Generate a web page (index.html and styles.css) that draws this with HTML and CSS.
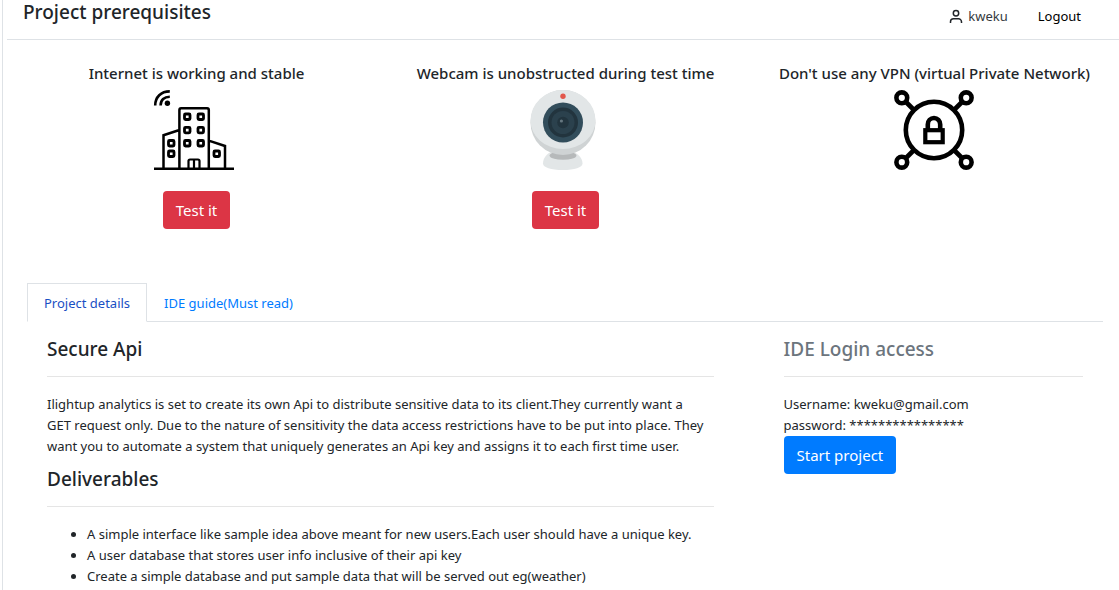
FILE: index.html
```html
<!DOCTYPE html>
<html lang="en">
<head>
<meta charset="utf-8">
<meta name="viewport" content="width=device-width, initial-scale=1">
<title>Project prerequisites</title>
<link rel="stylesheet" href="styles.css">
</head>
<body>
<div class="page">
  <header class="topbar">
    <h1 class="heading">Project prerequisites</h1>
    <nav class="account">
      <a class="user" href="#">
        <svg width="14" height="14" viewBox="0 0 14 14" fill="none" stroke="#212529" stroke-width="1.5" aria-hidden="true"><circle cx="7" cy="4.200" r="2.700"/><path d="M1.500 14v-1.200a3 3 0 0 1 3-3h5a3 3 0 0 1 3 3V14"/></svg>
        <span>kweku</span>
      </a>
      <a class="logout" href="#">Logout</a>
    </nav>
  </header>

  <section class="checks">
    <article class="check">
      <h2 class="check-title">Internet is working and stable</h2>
      <svg class="picture" viewBox="2 0 80 80" fill="none" stroke="#000" stroke-width="2.200" aria-hidden="true">
        <path d="M1.200 15.500C1.200 7 7 1.400 15.800 1.400M6.600 15.500c0-5.500 3.600-8.800 9.200-8.800" stroke-width="2.600"/>
        <circle cx="13.400" cy="13.200" r="2.700" fill="#000" stroke="none"/>
        <path d="M0 78.700h80" stroke-width="2.600"/>
        <path d="M25.400 78V20q0-1.700 1.700-1.700h26q1.700 0 1.700 1.700V78M25.400 40 9.500 45.200V78M54.800 50.600 71 56v22" stroke-width="2.500"/>
        <g stroke-width="2.800">
          <rect x="30.500" y="24" width="5.500" height="5.500" rx="1"/><rect x="44" y="24" width="5.500" height="5.500" rx="1"/>
          <rect x="30.500" y="37.300" width="5.500" height="5.500" rx="1"/><rect x="44" y="37.300" width="5.500" height="5.500" rx="1"/>
          <rect x="30.500" y="50.500" width="5.500" height="5.500" rx="1"/><rect x="44" y="50.500" width="5.500" height="5.500" rx="1"/>
          <rect x="14.500" y="50.500" width="5.500" height="5.500" rx="1"/><rect x="14.500" y="61" width="5.500" height="5.500" rx="1"/>
          <rect x="60" y="61" width="5.500" height="5.500" rx="1"/>
        </g>
        <path d="M34.500 78v-7q0-1.500 1.500-1.500h8q1.500 0 1.500 1.500v7M40 69.500V78"/>
      </svg>
      <button class="btn btn-danger" type="button">Test it</button>
    </article>
    <article class="check">
      <h2 class="check-title">Webcam is unobstructed during test time</h2>
      <svg class="picture" viewBox="0 0 80 80" aria-hidden="true">
        <path d="M18 73.500C18 68 22 63 28 61h18c7 2 11.500 7 11.500 12.500 0 4-8 6.500-19.700 6.500S18 77.500 18 73.500z" fill="#e2e6e7"/>
        <ellipse cx="38" cy="65.500" rx="13.500" ry="4.300" fill="#b6b9ba"/>
        <circle cx="38" cy="32.500" r="32.500" fill="#cfd3d4"/>
        <path d="M5.500 30.500a32.500 30.500 0 0 1 65 0 32.500 28.500 0 0 1-65 0z" fill="#e2e6e7"/>
        <circle cx="38" cy="6.300" r="2.700" fill="#e2574c"/>
        <circle cx="38" cy="32.500" r="20" fill="#324d5b"/>
        <circle cx="38" cy="32.500" r="15" fill="#22343e"/>
        <circle cx="38" cy="32.500" r="11.500" fill="#2b414d"/>
        <circle cx="38" cy="32.500" r="5.800" fill="#22343e"/>
        <circle cx="36.400" cy="31" r="1.600" fill="#667780"/>
      </svg>
      <button class="btn btn-danger" type="button">Test it</button>
    </article>
    <article class="check">
      <h2 class="check-title">Don't use any VPN (virtual Private Network)</h2>
      <svg class="picture" viewBox="0 0 80 80" fill="none" stroke="#000" stroke-width="4.600" aria-hidden="true">
        <circle cx="40" cy="40" r="28.200"/>
        <circle cx="7.800" cy="7.800" r="5.400"/><circle cx="72.200" cy="7.800" r="5.400"/><circle cx="7.800" cy="72.200" r="5.400"/><circle cx="72.200" cy="72.200" r="5.400"/>
        <path d="m12 12 8 8m40 0 8-8M12 68l8-8m40 0 8 8"/>
        <rect x="31.300" y="40.200" width="17.400" height="12" stroke-width="4.200"/>
        <path d="M33.800 39v-4.500a6.200 6.500 0 0 1 12.400 0V39" stroke-width="4.600"/>
      </svg>
    </article>
  </section>

  <main class="project">
    <div class="tabs" role="tablist">
      <a class="tab tab-active" role="tab" aria-selected="true" href="#details">Project details</a>
      <a class="tab" role="tab" aria-selected="false" href="#guide">IDE guide(Must read)</a>
    </div>
    <div class="panel" id="details" role="tabpanel">
      <section>
        <h2 class="heading section-title">Secure Api</h2>
        <p class="text">Ilightup analytics is set to create its own Api to distribute sensitive data to its client.They currently want a<br>GET request only. Due to the nature of sensitivity the data access restrictions have to be put into place. They<br>want you to automate a system that uniquely generates an Api key and assigns it to each first time user.</p>
        <h2 class="heading section-title next">Deliverables</h2>
        <ul class="list">
          <li>A simple interface like sample idea above meant for new users.Each user should have a unique key.</li>
          <li>A user database that stores user info inclusive of their api key</li>
          <li>Create a simple database and put sample data that will be served out eg(weather)</li>
        </ul>
      </section>
      <aside>
        <h2 class="heading section-title muted">IDE Login access</h2>
        <p class="text">Username: kweku@gmail.com<br>password: ****************</p>
        <button class="btn btn-primary" type="button">Start project</button>
      </aside>
    </div>
  </main>
</div>
</body>
</html>
```
FILE: styles.css
```css
* {
  box-sizing: border-box;
}

body {
  margin: 0;
  background: #fff;
  color: #212529;
  font-family: "Segoe UI", "Noto Sans", "Open Sans", sans-serif;
  font-size: 13px;
  line-height: 21px;
}

h1, h2, p, ul {
  margin: 0;
}

a {
  text-decoration: none;
}

.page {
  min-height: 100vh;
  margin-left: 2px;
  padding-left: 4px;
  border-left: 1px solid #dee2e6;
}

.heading {
  font-size: 19px;
  font-weight: 500;
  line-height: 24px;
}

.topbar {
  display: flex;
  justify-content: space-between;
  height: 40px;
  padding: 0 38px 0 16px;
  border-bottom: 1px solid #dee2e6;
}

.account {
  display: flex;
  align-items: center;
  gap: 30px;
  height: 32px;
}

.user {
  display: flex;
  align-items: center;
  gap: 5px;
  color: #343a40;
}

.logout {
  color: #000;
}

.checks {
  display: grid;
  grid-template-columns: repeat(3, 1fr);
  padding: 23px 0 54px 5px;
}

.check {
  display: flex;
  flex-direction: column;
  align-items: center;
}

.check-title {
  font-size: 15px;
  font-weight: 500;
  line-height: 20px;
  white-space: nowrap;
}

.picture {
  width: 80px;
  height: 80px;
  margin: 7px 2px 21px 0;
  overflow: visible;
}

.btn {
  height: 38px;
  padding: 0 13px;
  border: 0;
  border-radius: 4px;
  color: #fff;
  font-family: inherit;
  font-size: 15px;
  line-height: 24px;
}

.btn-danger {
  background: #dc3545;
}

.btn-primary {
  display: block;
  background: #007bff;
}

.project {
  padding: 0 16px 0 20px;
}

.tabs {
  display: flex;
  border-bottom: 1px solid #dee2e6;
}

.tab {
  margin-bottom: -1px;
  padding: 9px 16px 7px;
  border: 1px solid transparent;
  color: #007bff;
}

.tab-active {
  border-color: #dee2e6 #dee2e6 #fff;
  background: #fff;
  color: #1a4fc4;
}

.panel {
  display: grid;
  grid-template-columns: 69fr 31fr;
  gap: 70px;
  padding: 15px 20px 0;
}

.section-title {
  margin-bottom: 17px;
  padding-bottom: 15px;
  border-bottom: 1px solid #e5e5e5;
}

.next {
  margin-top: 10px;
}

.muted {
  color: #6c757d;
}

.list {
  padding-left: 40px;
}
```
